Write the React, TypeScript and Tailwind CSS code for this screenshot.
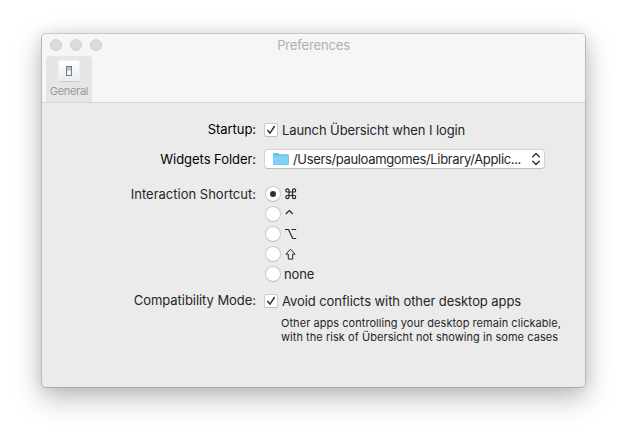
import type { ReactNode } from "react";

function Check() {
  return (
    <span className="flex h-[14px] w-[14px] shrink-0 items-center justify-center rounded-[2.5px] border border-[#cbcbcb] border-b-[#bdbdbd] bg-white">
      <svg width="10" height="10" viewBox="0 0 10 10" fill="none" stroke="#333" strokeWidth="1.5" strokeLinecap="round" strokeLinejoin="round">
        <path d="M1.7 5.3 4 8.2 8.3 1.5" />
      </svg>
    </span>
  );
}

function Radio({ checked, children }: { checked?: boolean; children: ReactNode }) {
  return (
    <div className="flex h-5 items-center">
      <span className="flex h-4 w-4 shrink-0 items-center justify-center rounded-full border border-[#cbcbcb] border-b-[#bbb] bg-white">
        {checked && <span className="h-1.5 w-1.5 rounded-full bg-[#333]" />}
      </span>
      <span className="ml-[3px] flex h-5 items-center">{children}</span>
    </div>
  );
}

function Glyph({ children }: { children: ReactNode }) {
  return (
    <svg width="12" height="12" viewBox="0 0 12 12" className="ml-px" fill="none" stroke="#262626" strokeWidth="1.2">
      {children}
    </svg>
  );
}

export default function App() {
  return (
    <div className="h-[437px] w-[627px] overflow-hidden bg-white pl-[41px] pt-[33px] font-['Inter','Liberation_Sans',sans-serif] text-[13px] leading-5 text-[#262626]">
      <div className="flex h-[355px] w-[545px] flex-col overflow-hidden rounded-[5px] border border-[#b9b9b9] border-t-[#c9c9c9] border-b-[#a9a9a9] bg-[#ebebeb] shadow-[0_10px_28px_rgba(0,0,0,0.27),0_0_14px_rgba(0,0,0,0.08)]">
        <div className="h-[69px] shrink-0 border-b border-[#d5d5d5] bg-[#f6f6f6]">
          <div className="grid h-[22px] grid-cols-[100px_1fr_100px] items-center">
            <div className="flex gap-2 pl-2">
              <span className="h-3 w-3 rounded-full border border-[#d3d3d3] bg-[#dcdcdc]" />
              <span className="h-3 w-3 rounded-full border border-[#d3d3d3] bg-[#dcdcdc]" />
              <span className="h-3 w-3 rounded-full border border-[#d3d3d3] bg-[#dcdcdc]" />
            </div>
            <span className="text-center tracking-[-0.15px] text-[#b0b0b0]">Preferences</span>
          </div>
          <div className="ml-1 flex h-[46px] w-[46px] flex-col items-center rounded-t-[4px] bg-[#e6e6e6] pt-1">
            <span className="flex h-[22px] w-[22px] items-center justify-center border border-[#eef1f4] border-b-[#c5ced5] bg-linear-to-b from-white to-[#e9edf1]">
              <svg width="6" height="10" viewBox="0 0 6 10">
                <rect x="0.5" y="0.5" width="5" height="9" fill="#f5f5f5" stroke="#75787b" />
                <rect x="1" y="1" width="4" height="3.5" fill="#bcbec0" />
              </svg>
            </span>
            <span className="mt-[2px] text-[11px] leading-[14px] tracking-[-0.3px] text-[#999]">General</span>
          </div>
        </div>

        <div className="grid grid-cols-[214px_1fr] gap-x-2 pt-[17px]">
          <span className="-mt-px text-right tracking-[-0.05px] text-black">Startup:</span>
          <div className="flex h-5 items-center gap-1">
            <Check />
            <span className="whitespace-nowrap tracking-[-0.1px]">Launch Übersicht when I login</span>
          </div>

          <span className="mt-[9px] text-right tracking-[-0.05px] text-black">Widgets Folder:</span>
          <div className="mt-[9px] flex h-5 w-[281px] items-center rounded-[4px] border border-[#d2d2d2] border-b-[#bcbcbc] bg-white pl-2">
            <svg width="16" height="14" viewBox="0 0 16 14">
              <path d="M0 2.2Q0 1 1.2 1H5l1.5 1.3h8.3Q16 2.3 16 3.5v8.3q0 1.2-1.2 1.2H1.2Q0 13 0 11.8Z" fill="#66c1ec" />
              <path d="M0 4h16v7.6q0 .9-1.2.9H1.2Q0 12.5 0 11.6Z" fill="#7ed2f7" />
            </svg>
            <span className="ml-1 whitespace-nowrap tracking-[-0.35px]">/Users/pauloamgomes/Library/Applic...</span>
            <svg className="ml-auto mr-[3px]" width="10" height="14" viewBox="0 0 10 14" fill="none" stroke="#333" strokeWidth="1.4" strokeLinecap="round" strokeLinejoin="round">
              <path d="M1.700 4.700 5 1.400 8.300 4.700M1.700 9.300 5 12.600 8.300 9.300" />
            </svg>
          </div>

          <span className="mt-[15px] text-right">Interaction Shortcut:</span>
          <div className="mt-[15px] pl-px">
            <Radio checked>
              <Glyph>
                <path d="M4 4V2.400A1.600 1.600 0 1 0 2.400 4h6.700A1.600 1.600 0 1 0 7.500 2.400v6.700A1.600 1.600 0 1 0 9.100 7.500H2.400A1.600 1.600 0 1 0 4 9.100Z" />
              </Glyph>
            </Radio>
            <Radio>
              <Glyph><path d="M0.800 6 4.300 2.600 7.800 6" /></Glyph>
            </Radio>
            <Radio>
              <Glyph><path d="M0 1.500h3.500L7.800 10.500h3.400M6.500 1.500h4.700" /></Glyph>
            </Radio>
            <Radio>
              <Glyph><path d="M5.500 1.200.9 6.200h2.400v4.900h4.400V6.200h2.400Z" strokeWidth="1" strokeLinejoin="round" /></Glyph>
            </Radio>
            <Radio><span className="tracking-[-0.1px]">none</span></Radio>
          </div>

          <span className="mt-[6px] text-right tracking-[-0.05px]">Compatibility Mode:</span>
          <div className="mt-[7px]">
            <div className="flex h-5 items-center gap-1">
              <Check />
              <span className="whitespace-nowrap tracking-[-0.08px]">Avoid conflicts with other desktop apps</span>
            </div>
            <p className="mt-[5px] whitespace-nowrap pl-[17px] text-[11px] leading-[14px] tracking-[0.05px]">
              Other apps controlling your desktop remain clickable,
              <br />
              with the risk of Übersicht not showing in some cases
            </p>
          </div>
        </div>
      </div>
    </div>
  );
}
